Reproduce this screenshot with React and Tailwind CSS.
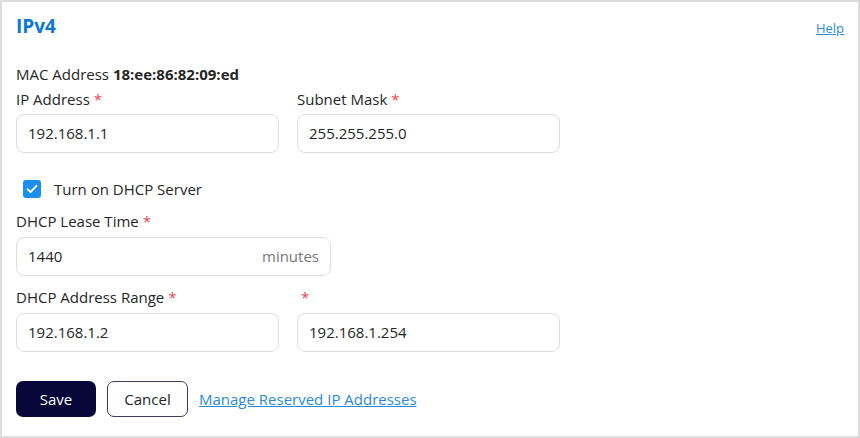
import React from "react";

const font = { fontFamily: '"Open Sans", "Noto Sans", sans-serif' };

function Star() {
  return <span className="text-[#e8464a] ml-1">*</span>;
}

function Field({ value, w = "w-[263px]", suffix }) {
  return (
    <div className={`${w} h-[39px] border border-[#dddddd] rounded-[8px] bg-white flex items-center px-[11px] text-[15px] text-[#262626]`}>
      <span className="flex-1">{value}</span>
      {suffix && <span className="text-[#777777]">{suffix}</span>}
    </div>
  );
}

export default function App() {
  return (
    <div style={font} className="w-[860px] h-[438px] bg-white border-2 border-[#dcdcdc] box-border relative px-[14px]">
      <div className="flex items-start justify-between">
        <div className="pt-[10px] text-[19px] font-bold text-[#0b78d1] leading-[28px]">IPv4</div>
        <a className="mt-[17px] text-[13px] text-[#2a8ad8] underline">Help</a>
      </div>
      <div className="mt-[24px] text-[15px] text-[#262626] leading-[20px]">
        MAC Address <span className="font-bold">18:ee:86:82:09:ed</span>
      </div>
      <div className="flex gap-[18px] mt-[5px]">
        <div>
          <div className="text-[15px] text-[#262626] leading-[20px]">IP Address<Star /></div>
          <div className="mt-[5px]"><Field value="192.168.1.1" /></div>
        </div>
        <div>
          <div className="text-[15px] text-[#262626] leading-[20px]">Subnet Mask<Star /></div>
          <div className="mt-[5px]"><Field value="255.255.255.0" /></div>
        </div>
      </div>
      <div className="flex items-center mt-[26px] ml-[7px] gap-[13px]">
        <div className="w-[18px] h-[18px] rounded-[3px] bg-[#1b8ef0] flex items-center justify-center">
          <svg width="12" height="10" viewBox="0 0 12 10" fill="none">
            <path d="M1.5 5.2L4.5 8L10.5 1.8" stroke="white" strokeWidth="1.8" strokeLinecap="round" strokeLinejoin="round" />
          </svg>
        </div>
        <span className="text-[15px] text-[#262626] leading-[20px]">Turn on DHCP Server</span>
      </div>
      <div className="mt-[12px] text-[15px] text-[#262626] leading-[20px]">DHCP Lease Time<Star /></div>
      <div className="mt-[6px]"><Field value="1440" w="w-[315px]" suffix="minutes" /></div>
      <div className="flex gap-[18px] mt-[11px]">
        <div>
          <div className="text-[15px] text-[#262626] leading-[20px]">DHCP Address Range<Star /></div>
          <div className="mt-[6px]"><Field value="192.168.1.2" /></div>
        </div>
        <div>
          <div className="text-[15px] text-[#262626] leading-[20px]"><Star /></div>
          <div className="mt-[6px]"><Field value="192.168.1.254" /></div>
        </div>
      </div>
      <div className="flex items-center mt-[29px] gap-[11px]">
        <button className="w-[80px] h-[36px] rounded-[7px] bg-[#07073a] text-white text-[15px]">Save</button>
        <button className="w-[81px] h-[36px] rounded-[7px] border border-[#3c3c62] bg-white text-[#262626] text-[15px]">Cancel</button>
        <a className="text-[15px] text-[#2a8ad8] underline">Manage Reserved IP Addresses</a>
      </div>
    </div>
  );
}
